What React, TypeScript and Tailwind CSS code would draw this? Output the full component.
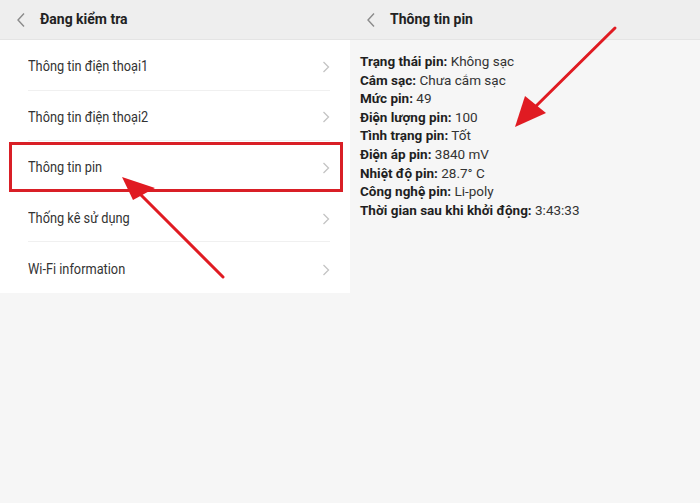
import React from "react";

const rows = [
  "Thông tin điện thoại1",
  "Thông tin điện thoại2",
  "Thông tin pin",
  "Thống kê sử dụng",
  "Wi-Fi information",
];

const info: [string, string][] = [
  ["Trạng thái pin:", "Không sạc"],
  ["Cắm sạc:", "Chưa cắm sạc"],
  ["Mức pin:", "49"],
  ["Điện lượng pin:", "100"],
  ["Tình trạng pin:", "Tốt"],
  ["Điện áp pin:", "3840 mV"],
  ["Nhiệt độ pin:", "28.7° C"],
  ["Công nghệ pin:", "Li-poly"],
  ["Thời gian sau khi khởi động:", "3:43:33"],
];

function Back() {
  return (
    <svg width="10" height="16" viewBox="0 0 10 16" fill="none">
      <path d="M8 1.5 L2 8 L8 14.5" stroke="#8a8a8a" strokeWidth="1.4" />
    </svg>
  );
}

function Chevron() {
  return (
    <svg width="8" height="12" viewBox="0 0 8 12" fill="none">
      <path d="M1.5 1 L6.5 6 L1.5 11" stroke="#c4c4c4" strokeWidth="1.3" />
    </svg>
  );
}

function Header({ title }: { title: string }) {
  return (
    <div className="h-10 bg-[#eeeeee] flex items-center pl-[16px] gap-[14px] border-b border-[#e4e4e4]">
      <Back />
      <span className="text-[14px] font-bold text-[#222]">{title}</span>
    </div>
  );
}

export default function App() {
  return (
    <div
      className="relative w-[700px] h-[503px] bg-[#f6f6f6] overflow-hidden"
      style={{ fontFamily: "Roboto, 'Noto Sans', sans-serif" }}
    >
      <div className="grid grid-cols-[350px_350px]">
        <div>
          <Header title="Đang kiểm tra" />
          <div className="bg-white">
            {rows.map((r, i) => (
              <div key={r} className="relative h-[50.6px] pl-[28px] pr-[20px]">
                <div
                  className={`h-full flex items-center justify-between pt-[4px] ${
                    i < rows.length - 1 ? "border-b border-[#f0f0f0]" : ""
                  }`}
                >
                  <span className="inline-block origin-left scale-x-[0.88] text-[14.5px] text-[#333]">
                    {r}
                  </span>
                  <Chevron />
                </div>
                {i === 2 && (
                  <div className="absolute left-[9px] right-[7px] top-[1px] bottom-0 border-[3px] border-[#d91f26]" />
                )}
              </div>
            ))}
          </div>
        </div>
        <div>
          <Header title="Thông tin pin" />
          <div className="pt-[12px] pl-[10px] flex flex-col">
            {info.map(([k, v]) => (
              <div key={k} className="h-[18.6px] text-[13.5px] leading-[18.6px] text-[#1f1f1f]">
                <span className="font-bold">{k}</span> <span className="text-[#333]">{v}</span>
              </div>
            ))}
          </div>
        </div>
      </div>

      <svg className="absolute inset-0 pointer-events-none" width="700" height="503">
        <line x1="223" y1="277" x2="140" y2="194" stroke="#e01b22" strokeWidth="3" strokeLinecap="round" />
        <polygon points="122,177 155,188 133,200" fill="#e01b22" />
        <line x1="615" y1="28" x2="530" y2="112" stroke="#e01b22" strokeWidth="3" strokeLinecap="round" />
        <polygon points="515,127 525,96 546,113" fill="#e01b22" />
      </svg>
    </div>
  );
}
